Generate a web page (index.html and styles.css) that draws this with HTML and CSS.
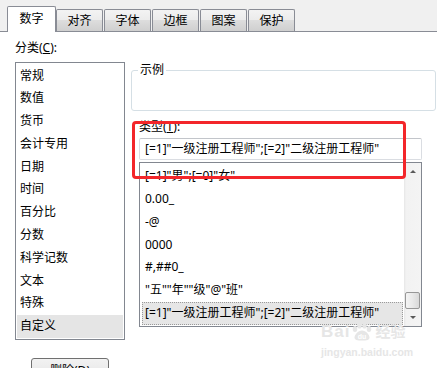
FILE: index.html
```html
<!DOCTYPE html>
<html lang="zh-CN">
<head>
    <meta charset="UTF-8">
    <title>设置单元格格式</title>
    <link rel="stylesheet" href="styles.css">
</head>
<body>

<div class="tabs">
    <div class="tab active">数字</div>
    <div class="tab">对齐</div>
    <div class="tab">字体</div>
    <div class="tab">边框</div>
    <div class="tab">图案</div>
    <div class="tab">保护</div>
</div>

<div class="panel">
    <div class="left-col">
        <div class="field-label">分类(<u>C</u>):</div>
        <ul class="category-list">
            <li>常规</li>
            <li>数值</li>
            <li>货币</li>
            <li>会计专用</li>
            <li>日期</li>
            <li>时间</li>
            <li>百分比</li>
            <li>分数</li>
            <li>科学记数</li>
            <li>文本</li>
            <li>特殊</li>
            <li class="selected">自定义</li>
        </ul>
        <button class="btn" type="button">删除(<u>D</u>)</button>
    </div>

    <div class="right-col">
        <fieldset class="sample">
            <legend>示例</legend>
            <div class="sample-body"></div>
        </fieldset>

        <div class="type-label">类型(<u>T</u>):</div>
        <div class="type-input">[=1]"一级注册工程师";[=2]"二级注册工程师"</div>

        <div class="format-list">
            <ul class="format-items">
                <li>[=1]"男";[=0]"女"</li>
                <li>0.00_</li>
                <li>-@</li>
                <li>0000</li>
                <li>#,##0_</li>
                <li>"五""年""级"@"班"</li>
                <li class="selected">[=1]"一级注册工程师";[=2]"二级注册工程师"</li>
            </ul>
            <div class="scrollbar">
                <div class="sb-btn"><span class="arrow-up"></span></div>
                <div class="sb-track"><div class="sb-thumb"></div></div>
                <div class="sb-btn"><span class="arrow-down"></span></div>
            </div>
        </div>

        <!-- red annotation box -->
        <div class="highlight"></div>
    </div>
</div>

<div class="watermark">
    <div class="wm-logo">
        <span class="wm-bai">Bai</span>
        <svg class="wm-paw" width="22" height="18" viewBox="0 0 22 18">
            <ellipse cx="4" cy="6" rx="2.3" ry="3" fill="#e6e6e6"/>
            <ellipse cx="8.5" cy="2.8" rx="2.3" ry="2.8" fill="#e6e6e6"/>
            <ellipse cx="13.5" cy="2.8" rx="2.3" ry="2.8" fill="#e6e6e6"/>
            <ellipse cx="18" cy="6" rx="2.3" ry="3" fill="#e6e6e6"/>
            <path d="M11 7.5 C7 7.5 3.5 12 3.5 14.5 C3.5 17 6 17.5 11 17.5 C16 17.5 18.5 17 18.5 14.5 C18.5 12 15 7.5 11 7.5 Z" fill="#e6e6e6"/>
            <text x="11" y="16" text-anchor="middle" font-size="7" font-weight="bold" fill="#fff" font-family="Liberation Sans, sans-serif">du</text>
        </svg>
        <span class="wm-jy">经验</span>
    </div>
    <div class="wm-url">jingyan.baidu.com</div>
</div>

</body>
</html>
```

FILE: styles.css
```css
body {
    margin: 0;
    width: 437px;
    height: 368px;
    overflow: hidden;
    position: relative;
    background: #fff;
    font-family: "Noto Sans", "Noto Sans CJK SC", sans-serif;
    font-size: 12px;
    color: #000;
}
u {
    text-decoration: underline;
}

/* tab strip */
.tabs {
    display: flex;
    align-items: flex-end;
    height: 31px;
    padding-left: 7px;
    background: #f0f0f0;
    border-bottom: 1px solid #898c95;
}
.tab {
    box-sizing: border-box;
    width: 47px;
    height: 22px;
    margin-left: 1px;
    border: 1px solid #898c95;
    border-bottom: none;
    border-radius: 2px 2px 0 0;
    background: linear-gradient(#f3f3f3, #ebebeb 50%, #dddddd 50%, #cfcfcf);
    text-align: center;
    line-height: 21px;
}
.tab.active {
    width: 49px;
    height: 26px;
    margin-left: 0;
    margin-bottom: -1px;
    background: #fff;
    line-height: 24px;
}
.tab.active + .tab {
    margin-left: 0;
}

/* main panel */
.panel {
    display: flex;
    gap: 6px;
    padding-left: 15px;
}
.left-col {
    width: 110px;
}
.field-label {
    margin-top: 8px;
    line-height: 16px;
}
.category-list {
    box-sizing: border-box;
    height: 278px;
    margin: 6px 0 0;
    padding: 1.5px 1px 0;
    list-style: none;
    border: 1px solid #828790;
    overflow: hidden;
}
.category-list li {
    height: 22.8px;
    line-height: 22.8px;
    padding-left: 3px;
}
.category-list li.selected {
    background: #e5e5e5;
}
.btn {
    display: block;
    width: 78px;
    height: 23px;
    margin: 18px 0 0 16px;
    padding: 0;
    border: 1px solid #707070;
    border-radius: 3px;
    background: linear-gradient(#f2f2f2, #ebebeb 50%, #dddddd 50%, #cfcfcf);
    font: inherit;
    color: #000;
}

.right-col {
    position: relative;
    width: 305px;
}
.sample {
    margin: 31px 0 0;
    padding: 0;
    min-width: 0;
    border: 1px solid #d5dfe5;
    border-radius: 3px;
}
.sample legend {
    margin-left: 6px;
    padding: 0 2px;
    line-height: 14px;
}
.sample-body {
    height: 33px;
}
.type-label {
    margin: 8px 0 0 8px;
    line-height: 16px;
}
.type-input {
    box-sizing: border-box;
    width: 283px;
    height: 22px;
    margin: 3px 0 0 8px;
    padding-left: 5px;
    border: 1px solid #dadde2;
    border-top-color: #c2c5ca;
    border-radius: 2px;
    line-height: 20px;
    white-space: nowrap;
}
.format-list {
    box-sizing: border-box;
    display: flex;
    width: 283px;
    height: 165px;
    margin: 2px 0 0 8px;
    border: 1px solid #828790;
    overflow: hidden;
}
.format-items {
    flex: 1;
    margin: 0;
    padding: 2.2px 0 0;
    list-style: none;
    overflow: hidden;
}
.format-items li {
    box-sizing: border-box;
    height: 22.8px;
    line-height: 20.8px;
    margin: 0 1px 0 2px;
    padding-left: 2px;
    border: 1px solid transparent;
    white-space: nowrap;
}
.format-items li.selected {
    background: #e6e6e6;
    border: 1px dotted #9a9a9a;
}

/* scrollbar */
.scrollbar {
    display: flex;
    flex-direction: column;
    width: 17px;
    background: linear-gradient(90deg, #e6e6e6, #f2f2f2 2px, #f4f4f4);
}
.sb-btn {
    display: flex;
    justify-content: center;
    align-items: center;
    height: 17px;
}
.arrow-up {
    border-left: 3px solid transparent;
    border-right: 3px solid transparent;
    border-bottom: 3px solid #5a5a5a;
}
.arrow-down {
    border-left: 3px solid transparent;
    border-right: 3px solid transparent;
    border-top: 3px solid #5a5a5a;
}
.sb-track {
    flex: 1;
    display: flex;
    flex-direction: column;
    justify-content: flex-end;
}
.sb-thumb {
    box-sizing: border-box;
    height: 17px;
    margin: 0 1px;
    border: 1px solid #979797;
    border-radius: 2px;
    background: linear-gradient(90deg, #f4f4f4, #e9e9e9 50%, #d9d9d9);
}

.highlight {
    position: absolute;
    left: 1px;
    top: 89px;
    box-sizing: border-box;
    width: 274px;
    height: 58px;
    border: 3px solid #f3262a;
    border-radius: 4px;
}

/* watermark */
.watermark {
    position: absolute;
    left: 321px;
    top: 321px;
    color: #e6e6e6;
    font-family: "Liberation Sans", "Noto Sans CJK SC", sans-serif;
    font-weight: bold;
}
.wm-logo {
    display: flex;
    align-items: flex-end;
    height: 20px;
}
.wm-bai {
    font-size: 17px;
    line-height: 18px;
    letter-spacing: 1px;
}
.wm-paw {
    margin: 0 2px 0 1px;
}
.wm-jy {
    font-size: 15px;
    line-height: 18px;
}
.wm-url {
    margin-top: 5px;
    font-size: 10.5px;
    line-height: 12px;
}
```
